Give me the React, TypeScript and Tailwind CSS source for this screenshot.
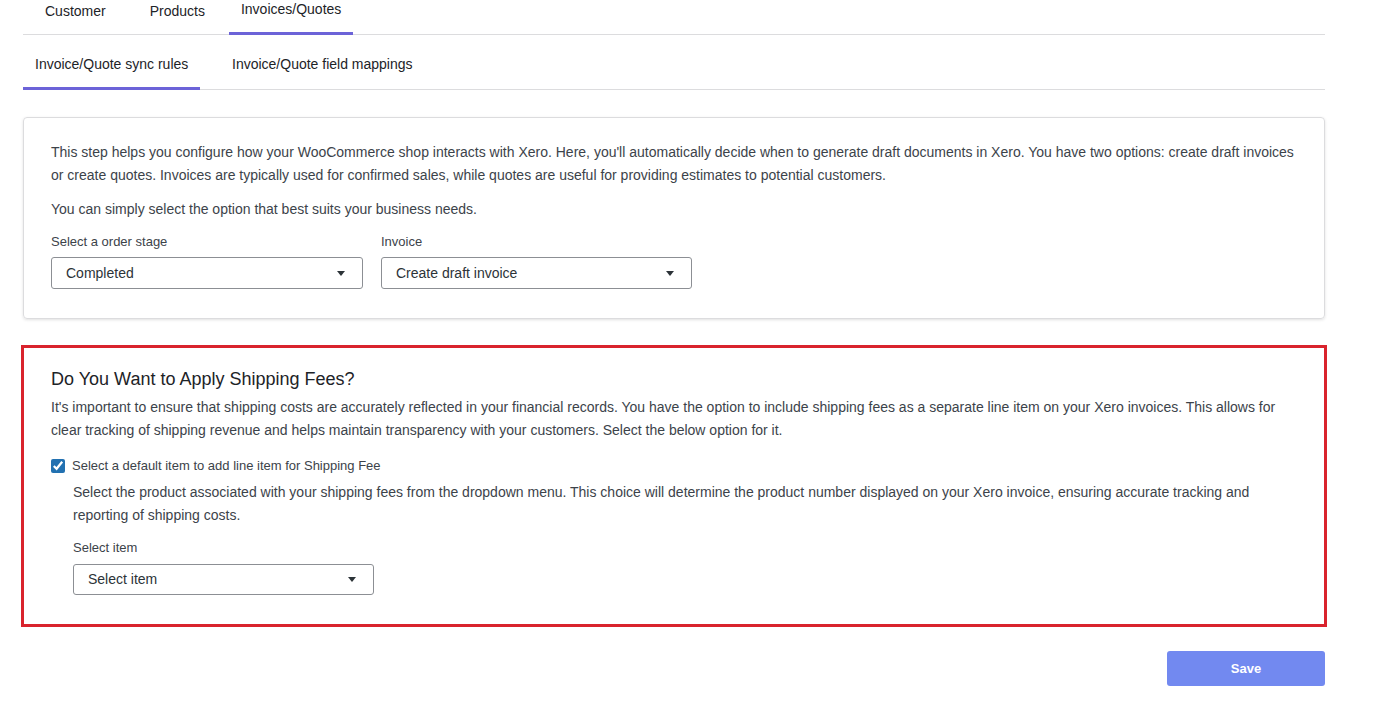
import React, { useState } from "react";

const TOP_TABS = ["Customer", "Products", "Invoices/Quotes"];
const SUB_TABS = ["Invoice/Quote sync rules", "Invoice/Quote field mappings"];

function Caret() {
  return (
    <svg width="8" height="5" viewBox="0 0 8 5" className="shrink-0">
      <path d="M0 0h8L4 5z" fill="#2c3338" />
    </svg>
  );
}

function SelectBox({ value, className }: { value: string; className: string }) {
  return (
    <div
      className={`flex items-center justify-between rounded-[3px] border border-[#8c8f94] bg-white pl-[14px] pr-[17px] text-[14px] text-[#2c3338] ${className}`}
    >
      <span>{value}</span>
      <Caret />
    </div>
  );
}

export default function App() {
  const [topTab, setTopTab] = useState(2);
  const [subTab, setSubTab] = useState(0);
  const [shipping, setShipping] = useState(true);

  return (
    <div className="min-h-[709px] bg-white font-['Liberation_Sans',Arial,sans-serif] text-[#3c434a]">
      <div className="ml-[23px] w-[1302px]">
        {/* top tabs */}
        <div className="flex h-[35px] items-stretch border-b border-[#dcdcde] pl-[22px]">
          {TOP_TABS.map((t, i) => (
            <button
              key={t}
              onClick={() => setTopTab(i)}
              className={`-mb-px flex items-start text-[14px] text-[#1d2327] ${
                i === 2 ? "px-[12px] pt-[1px]" : i === 0 ? "mr-[44px] pt-[3px]" : "mr-[24px] pt-[3px]"
              } ${topTab === i ? "border-b-[3px] border-[#6c63d8]" : ""}`}
            >
              <span className="leading-[16px]">{t}</span>
            </button>
          ))}
        </div>

        {/* sub tabs */}
        <div className="flex h-[55px] items-stretch border-b border-[#dcdcde]">
          {SUB_TABS.map((t, i) => (
            <button
              key={t}
              onClick={() => setSubTab(i)}
              className={`-mb-px flex items-start pt-[21px] text-[14px] text-[#1d2327] ${
                i === 0 ? "w-[177px] pl-[12px]" : "pl-[32px]"
              } ${subTab === i ? "border-b-[3px] border-[#6c63d8]" : ""}`}
            >
              <span className="leading-[16px]">{t}</span>
            </button>
          ))}
        </div>

        {/* sync rules card */}
        <div className="mt-[27px] rounded-[4px] border border-[#dcdcde] px-[27px] pb-[29px] pt-[23px] shadow-[0_1px_3px_rgba(0,0,0,0.12)]">
          <p className="text-[14px] leading-[23px]">
            This step helps you configure how your WooCommerce shop interacts with Xero. Here, you'll automatically decide
            when to generate draft documents in Xero. You have two options: create draft invoices or create quotes.
            Invoices are typically used for confirmed sales, while quotes are useful for providing estimates to potential
            customers.
          </p>
          <p className="mt-[11px] text-[14px] leading-[23px]">
            You can simply select the option that best suits your business needs.
          </p>
          <div className="mt-[12px] flex gap-[18px]">
            <div>
              <div className="mb-[6px] text-[13px] leading-[18px]">Select a order stage</div>
              <SelectBox value="Completed" className="h-[32px] w-[312px]" />
            </div>
            <div>
              <div className="mb-[6px] text-[13px] leading-[18px]">Invoice</div>
              <SelectBox value="Create draft invoice" className="h-[32px] w-[311px]" />
            </div>
          </div>
        </div>

        {/* shipping fees */}
        <div className="-mx-[2px] mt-[26px] border-[3px] border-[#d9232d] pb-[29px] pl-[27px] pr-[27px] pt-[18px]">
          <h2 className="text-[18px] leading-[26px] text-[#1d2327]">Do You Want to Apply Shipping Fees?</h2>
          <p className="mt-[4px] text-[14px] leading-[23px]">
            It's important to ensure that shipping costs are accurately reflected in your financial records. You have the
            option to include shipping fees as a separate line item on your Xero invoices. This allows for clear tracking
            of shipping revenue and helps maintain transparency with your customers. Select the below option for it.
          </p>
          <label className="mt-[15px] flex items-center gap-[7px] text-[13px] leading-[18px]">
            <input
              type="checkbox"
              checked={shipping}
              onChange={(e) => setShipping(e.target.checked)}
              className="m-0 h-[14px] w-[14px] accent-[#2271b1]"
            />
            Select a default item to add line item for Shipping Fee
          </label>
          <div className="pl-[22px]">
            <p className="mt-[6px] text-[14px] leading-[23px]">
              Select the product associated with your shipping fees from the dropdown menu. This choice will determine
              the product number displayed on your Xero invoice, ensuring accurate tracking and reporting of shipping
              costs.
            </p>
            <div className="mb-[7px] mt-[12px] text-[13px] leading-[18px]">Select item</div>
            <SelectBox value="Select item" className="h-[31px] w-[301px]" />
          </div>
        </div>

        <div className="mt-[24px] flex justify-end">
          <button className="h-[35px] w-[158px] rounded-[3px] bg-[#7289f0] text-[13px] font-bold text-white">
            Save
          </button>
        </div>
      </div>
    </div>
  );
}
